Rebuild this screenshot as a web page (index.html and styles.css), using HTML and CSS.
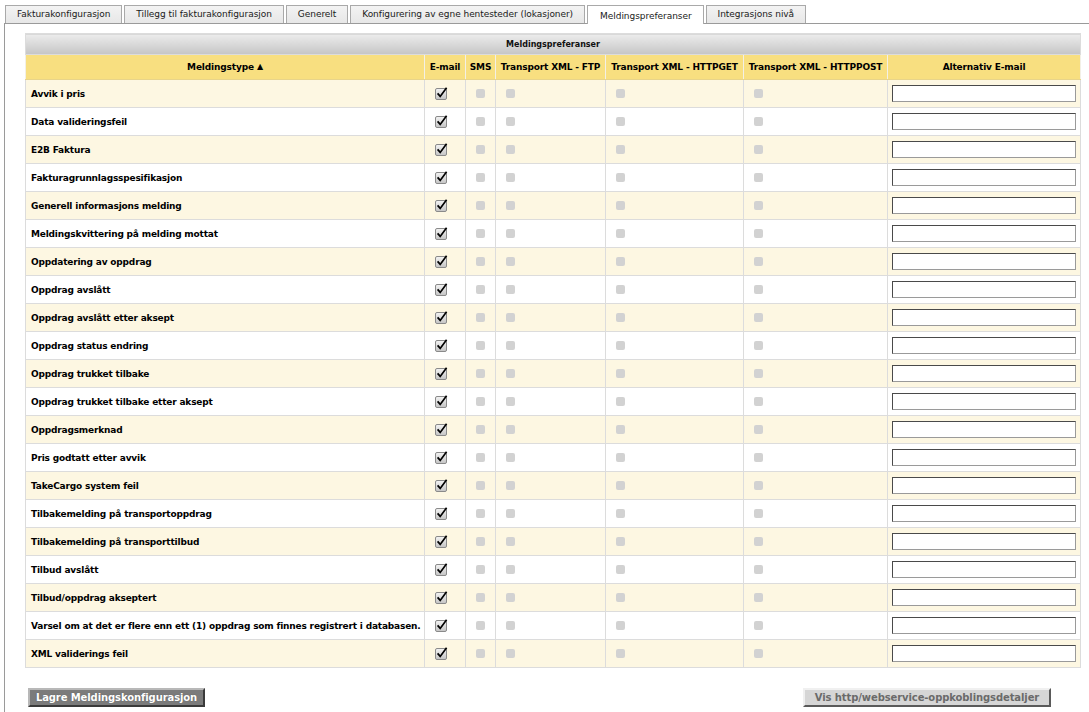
FILE: index.html
```html
<!DOCTYPE html>
<html lang="no">
<head>
<meta charset="utf-8">
<title>Meldingspreferanser</title>
<link rel="stylesheet" href="styles.css">
</head>
<body>
<div class="page">
  <ul class="tabs">
    <li class="tab">Fakturakonfigurasjon</li>
    <li class="tab">Tillegg til fakturakonfigurasjon</li>
    <li class="tab">Generelt</li>
    <li class="tab">Konfigurering av egne hentesteder (lokasjoner)</li>
    <li class="tab active">Meldingspreferanser</li>
    <li class="tab">Integrasjons nivå</li>
  </ul>
  <div class="panel">
    <table class="grid">
      <colgroup>
        <col class="c-type"><col class="c-mail"><col class="c-sms"><col class="c-ftp"><col class="c-get"><col class="c-post"><col class="c-alt">
      </colgroup>
      <thead>
        <tr class="caption-row"><th colspan="7">Meldingspreferanser</th></tr>
        <tr class="head-row">
          <th>Meldingstype <span class="sort">▲</span></th>
          <th>E-mail</th>
          <th>SMS</th>
          <th>Transport XML - FTP</th>
          <th>Transport XML - HTTPGET</th>
          <th>Transport XML - HTTPPOST</th>
          <th>Alternativ E-mail</th>
        </tr>
      </thead>
      <tbody id="rows"></tbody>
    </table>
    <div class="actions">
      <button class="btn btn-save">Lagre Meldingskonfigurasjon</button>
      <button class="btn btn-show">Vis http/webservice-oppkoblingsdetaljer</button>
    </div>
  </div>
</div>
<script>
var names = [
  "Avvik i pris","Data valideringsfeil","E2B Faktura","Fakturagrunnlagsspesifikasjon",
  "Generell informasjons melding","Meldingskvittering på melding mottat","Oppdatering av oppdrag",
  "Oppdrag avslått","Oppdrag avslått etter aksept","Oppdrag status endring","Oppdrag trukket tilbake",
  "Oppdrag trukket tilbake etter aksept","Oppdragsmerknad","Pris godtatt etter avvik",
  "TakeCargo system feil","Tilbakemelding på transportoppdrag","Tilbakemelding på transporttilbud",
  "Tilbud avslått","Tilbud/oppdrag akseptert",
  "Varsel om at det er flere enn ett (1) oppdrag som finnes registrert i databasen.",
  "XML validerings feil"
];
var check = '<svg class="chk" width="13" height="13" viewBox="0 0 13 13"><defs><linearGradient id="g" x1="0" y1="0" x2="0" y2="1"><stop offset="0" stop-color="#f4f4f4"/><stop offset="1" stop-color="#c4c4c4"/></linearGradient></defs><rect x="0.5" y="1.5" width="11" height="11" rx="1.5" fill="url(#g)" stroke="#8a8a8a"/><path d="M2.6 6.4 L5.2 9.4 L11.6 0.8" fill="none" stroke="#000" stroke-width="1.7"/></svg>';
var off = '<span class="off"></span>';
var html = "";
for (var i = 0; i < names.length; i++) {
  html += '<tr class="' + (i % 2 === 0 ? "odd" : "even") + '">' +
    '<td class="name">' + names[i] + '</td>' +
    '<td class="cb">' + check + '</td>' +
    '<td class="cb">' + off + '</td>' +
    '<td class="cb">' + off + '</td>' +
    '<td class="cb">' + off + '</td>' +
    '<td class="cb">' + off + '</td>' +
    '<td class="alt"><input type="text" class="alt-input"></td></tr>';
}
document.getElementById("rows").innerHTML = html;
</script>
</body>
</html>
```

FILE: styles.css
```css
html, body {
  margin: 0;
  padding: 0;
  background: #ffffff;
  overflow: hidden;
}
body {
  font-family: "DejaVu Sans", Verdana, sans-serif;
  color: #000;
}
.page {
  padding: 5px 0 0 4px;
  width: 1085px;
}
.tabs {
  list-style: none;
  margin: 0 0 0 1px;
  padding: 0;
  display: flex;
  align-items: flex-end;
  height: 18px;
  position: relative;
  z-index: 2;
}
.tab {
  box-sizing: border-box;
  height: 18px;
  padding: 0 11px;
  margin-right: 2px;
  border: 1px solid #a9a9a9;
  border-bottom: none;
  background: linear-gradient(#f3f3f3, #e7e7e7);
  font-size: 9px;
  letter-spacing: -0.05px;
  line-height: 17px;
  color: #1a1a1a;
  white-space: nowrap;
}
.tab.active {
  height: 19px;
  margin-bottom: -1px;
  background: #ffffff;
  line-height: 21px;
  padding: 0 11px 0 12px;
}
.panel {
  border-top: 1px solid #9a9a9a;
  border-left: 1px solid #9a9a9a;
  padding: 9px 0 0 20px;
  height: 700px;
  box-sizing: border-box;
}
.grid {
  border-collapse: collapse;
  table-layout: fixed;
  width: 1056px;
  border: 1px solid #dcdcdc;
}
.c-type { width: 399px; }
.c-mail { width: 41px; }
.c-sms { width: 30px; }
.c-ftp { width: 110px; }
.c-get { width: 138px; }
.c-post { width: 144px; }
.c-alt { width: 193px; }
.caption-row th {
  height: 20px;
  padding: 0;
  background: linear-gradient(#ececec, #c5c5c5);
  font-size: 8px;
  font-weight: bold;
  color: #111;
  text-align: center;
  border: 1px solid #dcdcdc;
}
.head-row th {
  height: 24px;
  padding: 0 3px;
  background: #f8df80;
  font-size: 9px;
  font-weight: bold;
  letter-spacing: -0.15px;
  text-align: center;
  white-space: nowrap;
  border: 1px solid #e8d48a;
  border-left-color: #f3f0e6;
  border-right-color: #f3f0e6;
}
.sort {
  font-size: 8px;
  position: relative;
  top: -1px;
}
tbody tr { height: 28px; }
tbody td {
  padding: 0 5px;
  border: 1px solid #dcdcdc;
  font-size: 9px;
  font-weight: bold;
  letter-spacing: -0.18px;
  white-space: nowrap;
  vertical-align: middle;
}
tr.odd td { background: #fdf7e2; }
tr.even td { background: #ffffff; }
td.cb {
  padding: 0 0 0 10px;
  line-height: 0;
}
.chk {
  display: inline-block;
  vertical-align: middle;
}
.off {
  display: inline-block;
  width: 9px;
  height: 9px;
  border-radius: 2px;
  background: #d2d2d2;
  vertical-align: middle;
}
td.alt {
  padding: 0 3px 0 4px;
}
.alt-input {
  display: block;
  box-sizing: border-box;
  width: 184px;
  height: 17px;
  margin: 0;
  padding: 0 2px;
  border: 1px solid;
  border-color: #4a4a4a #9a9a9a #9a9a9a #4a4a4a;
  background: #fff;
  font-size: 10px;
}
.actions {
  display: flex;
  justify-content: space-between;
  width: 1023px;
  margin: 20px 0 0 3px;
}
.btn {
  height: 19px;
  box-sizing: border-box;
  font-family: "DejaVu Sans", Verdana, sans-serif;
  font-size: 10px;
  font-weight: bold;
  letter-spacing: -0.1px;
  padding: 0;
  border: 2px solid;
  line-height: 14px;
  white-space: nowrap;
  text-align: center;
}
.btn-save {
  width: 177px;
  background: #7b7b7b;
  color: #ffffff;
  border-color: #b8b8b8 #3a3a3a #3a3a3a #b8b8b8;
  text-shadow: 0 0 1px #555;
}
.btn-show {
  width: 248px;
  background: #d6d6d6;
  color: #6a6a6a;
  border-color: #f0f0f0 #5a5a5a #5a5a5a #f0f0f0;
}
```
